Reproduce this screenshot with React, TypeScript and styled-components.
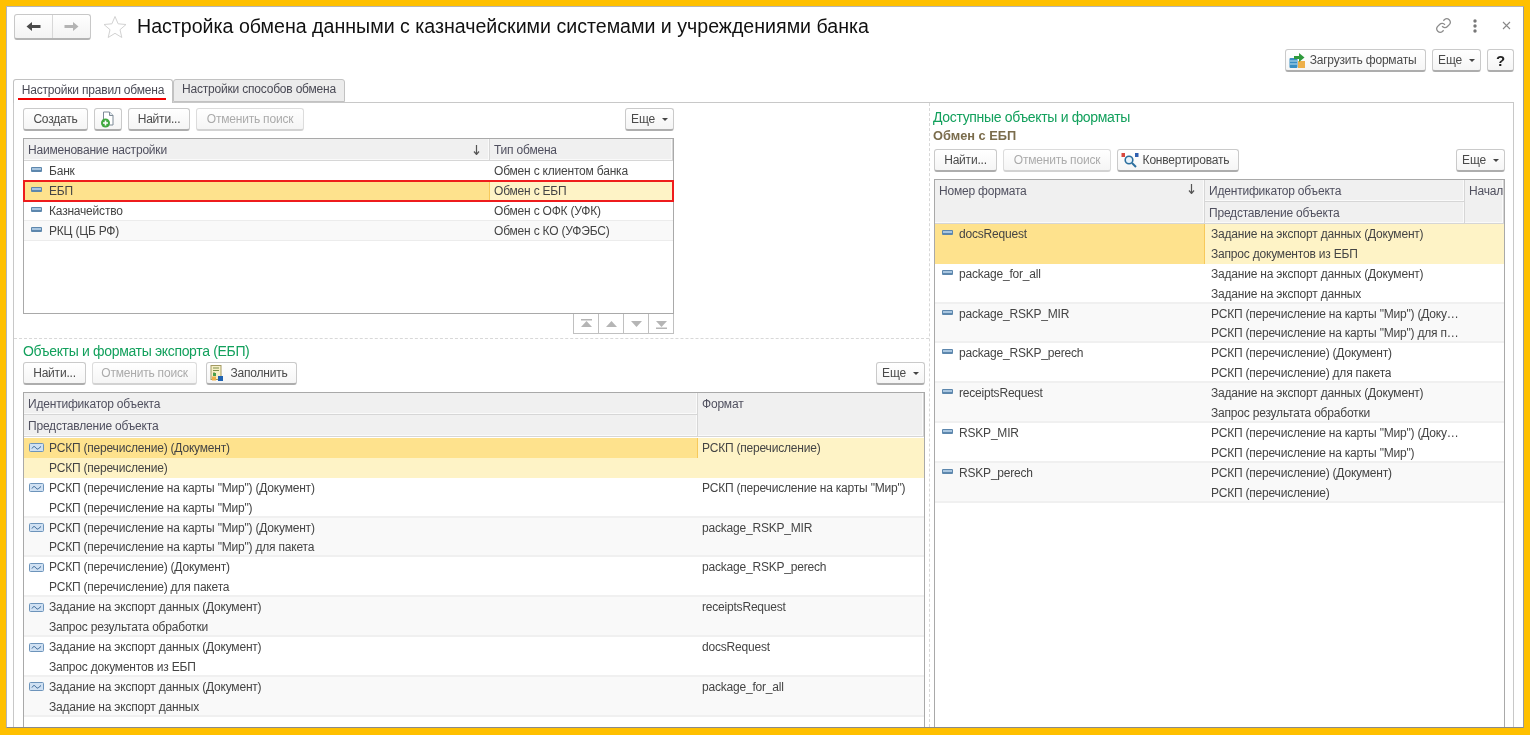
import { FunctionComponent } from "react";
import styled, { createGlobalStyle } from "styled-components";

const Global = createGlobalStyle`
  html, body { margin: 0; padding: 0; background: #ffc000; overflow: hidden; }
  body { font-family: "Liberation Sans", Arial, sans-serif; font-size: 12px; letter-spacing: -0.2px; color: #444; }
`;

const settings = [
  { name: "Банк", type: "Обмен с клиентом банка" },
  { name: "ЕБП", type: "Обмен с ЕБП", selected: true },
  { name: "Казначейство", type: "Обмен с ОФК (УФК)" },
  { name: "РКЦ (ЦБ РФ)", type: "Обмен с КО (УФЭБС)" },
];

const exportRows = [
  { id: "РСКП (перечисление) (Документ)", view: "РСКП (перечисление)", format: "РСКП (перечисление)", selected: true },
  { id: 'РСКП (перечисление на карты "Мир") (Документ)', view: 'РСКП (перечисление на карты "Мир")', format: 'РСКП (перечисление на карты "Мир")' },
  { id: 'РСКП (перечисление на карты "Мир") (Документ)', view: 'РСКП (перечисление на карты "Мир") для пакета', format: "package_RSKP_MIR" },
  { id: "РСКП (перечисление) (Документ)", view: "РСКП (перечисление) для пакета", format: "package_RSKP_perech" },
  { id: "Задание на экспорт данных (Документ)", view: "Запрос результата обработки", format: "receiptsRequest" },
  { id: "Задание на экспорт данных (Документ)", view: "Запрос документов из ЕБП", format: "docsRequest" },
  { id: "Задание на экспорт данных (Документ)", view: "Задание на экспорт данных", format: "package_for_all" },
];

const formatRows = [
  { num: "docsRequest", id: "Задание на экспорт данных (Документ)", view: "Запрос документов из ЕБП", selected: true },
  { num: "package_for_all", id: "Задание на экспорт данных (Документ)", view: "Задание на экспорт данных" },
  { num: "package_RSKP_MIR", id: 'РСКП (перечисление на карты "Мир") (Документ)', view: 'РСКП (перечисление на карты "Мир") для пакета' },
  { num: "package_RSKP_perech", id: "РСКП (перечисление) (Документ)", view: "РСКП (перечисление) для пакета" },
  { num: "receiptsRequest", id: "Задание на экспорт данных (Документ)", view: "Запрос результата обработки" },
  { num: "RSKP_MIR", id: 'РСКП (перечисление на карты "Мир") (Документ)', view: 'РСКП (перечисление на карты "Мир")' },
  { num: "RSKP_perech", id: "РСКП (перечисление) (Документ)", view: "РСКП (перечисление)" },
];

const DashIcon = () => (
  <svg width="11" height="5" viewBox="0 0 11 5">
    <rect x="0" y="0" width="11" height="5" rx="1" fill="#5d87ad" />
    <rect x="1" y="1" width="9" height="2" fill="#a9c6e0" />
  </svg>
);

const WaveIcon = () => (
  <svg width="15" height="9" viewBox="0 0 15 9">
    <rect x="0.5" y="0.5" width="14" height="8" rx="1" fill="#cfe0f2" stroke="#6d94bb" />
    <path d="M3 5.500c1.500-2.500 2.500-2.500 4-.5s2 1 5-1.500" fill="none" stroke="#2f5f90" />
  </svg>
);

const SortArrow = () => (
  <SortMark width="7" height="10" viewBox="0 0 7 10">
    <path d="M3.500 0v9M1 6.500l2.500 3 2.500-3" fill="none" stroke="#555" strokeWidth="1.200" />
  </SortMark>
);

const NewDocIcon = () => (
  <svg width="16" height="17" viewBox="0 0 16 17">
    <path d="M3.500 1h6l3.500 3.500V14h-9.500z" fill="#fff" stroke="#7d8a96" />
    <path d="M9.500 1v3.500H13" fill="#dfe6ec" stroke="#7d8a96" />
    <circle cx="5.500" cy="12" r="4.500" fill="#3fa83f" />
    <path d="M5.500 9.500v5M3 12h5" stroke="#fff" strokeWidth="1.600" />
  </svg>
);

const LoadIcon = () => (
  <svg width="17" height="17" viewBox="0 0 17 17">
    <rect x="0.500" y="6" width="8" height="10" rx="1" fill="#3a8fc2" />
    <path d="M1 9h7M1 12h7" stroke="#bfe0f0" />
    <rect x="9" y="9" width="7" height="7" fill="#eeb04a" />
    <path d="M5 4h5V1l5.500 4.500L10 10V7H5z" fill="#2f9a3c" />
  </svg>
);

const FillIcon = () => (
  <svg width="17" height="17" viewBox="0 0 17 17">
    <rect x="2" y="0.500" width="10" height="14" fill="#f6efc6" stroke="#a49a62" />
    <path d="M4 3h6M4 5.500h6M4 8h2" stroke="#7f8f4a" />
    <rect x="4" y="8" width="3" height="3" fill="#4aa04a" />
    <rect x="3" y="11.500" width="4" height="4" fill="#eeb04a" />
    <rect x="9" y="11" width="5" height="5" fill="#1f62b0" />
  </svg>
);

const ConvertIcon = () => (
  <svg width="18" height="16" viewBox="0 0 18 16">
    <circle cx="8" cy="8" r="3.800" fill="#e8f3fb" stroke="#2b6f9e" strokeWidth="1.600" />
    <path d="M11 11l4 4" stroke="#2b6f9e" strokeWidth="2" />
    <rect x="0.500" y="1" width="3.500" height="4" fill="#d8483f" />
    <rect x="14" y="1" width="3.500" height="4" fill="#2f5fb0" />
  </svg>
);

const Frame = styled.div`
  height: 735px;
  box-sizing: border-box;
  padding: 6px 6px 7px 6px;
  background: #ffc000;
`;

const Win = styled.div`
  height: 100%;
  box-sizing: border-box;
  background: #fff;
  border: 1px solid #b5b5b5;
  border-right-color: #9a9a9a;
  border-bottom-color: #8a8a8a;
  display: flex;
  flex-direction: column;
  overflow: hidden;
  filter: blur(0.3px);
`;

const Head = styled.div`
  display: flex;
  align-items: center;
  height: 27px;
  margin-top: 6px;
  padding: 0 12px 0 7px;
  flex: none;
`;

const NavGroup = styled.div`
  display: flex;
  width: 77px;
  height: 26px;
  box-sizing: border-box;
  border: 1px solid #c8c8c8;
  border-bottom: 2px solid #b4b4b4;
  border-radius: 3px;
  background: linear-gradient(#fff, #f3f3f3);
`;

const NavBtn = styled.div<{ $line?: boolean }>`
  flex: 1;
  display: flex;
  align-items: center;
  justify-content: center;
  border-left: ${({ $line }) => ($line ? "1px solid #d8d8d8" : "none")};
`;

const StarBox = styled.div`
  display: flex;
  margin: 0 10px 0 12px;
`;

const Title = styled.h1`
  margin: 0;
  flex: 1;
  font-size: 19.6px;
  font-weight: normal;
  letter-spacing: 0;
  color: #111;
  white-space: nowrap;
`;

const WinIcons = styled.div`
  display: flex;
  align-items: center;
  margin-top: -2px;
`;

const DotsIcon = styled.svg`
  margin: 0 25px 0 21px;
`;

const CommandBar = styled.div`
  display: flex;
  justify-content: flex-end;
  gap: 6px;
  height: 23px;
  margin-top: 9px;
  padding-right: 9px;
  flex: none;
`;

const Btn = styled.div<{ $w: number; $off?: boolean }>`
  width: ${({ $w }) => $w}px;
  height: 23px;
  flex: none;
  box-sizing: border-box;
  display: flex;
  align-items: center;
  justify-content: center;
  gap: 4px;
  white-space: nowrap;
  border: 1px solid ${({ $off }) => ($off ? "#dcdcdc" : "#cacaca")};
  border-bottom: 2px solid ${({ $off }) => ($off ? "#d2d2d2" : "#adadad")};
  border-radius: 3px;
  background: linear-gradient(#ffffff, #f5f5f5);
  color: ${({ $off }) => ($off ? "#ababab" : "#4a4a4a")};
`;

const IconBtn = styled(Btn)<{ $gapLeft?: number }>`
  padding-right: 6px;
  margin-left: ${({ $gapLeft }) => $gapLeft ?? 0}px;
`;

const Caret = styled.span`
  width: 0;
  height: 0;
  margin-left: 3px;
  border-left: 3px solid transparent;
  border-right: 3px solid transparent;
  border-top: 3px solid #444;
`;

const Help = styled.span`
  font-size: 15px;
  font-weight: bold;
  color: #222;
`;

const TabRow = styled.div`
  display: flex;
  height: 23px;
  margin-top: 7px;
  padding-left: 6px;
  flex: none;
  position: relative;
  z-index: 1;
`;

const Tab = styled.div<{ $active?: boolean; $w: number }>`
  position: relative;
  width: ${({ $w }) => $w}px;
  box-sizing: border-box;
  height: ${({ $active }) => ($active ? "24px" : "23px")};
  display: flex;
  align-items: center;
  justify-content: center;
  padding-bottom: ${({ $active }) => ($active ? "4px" : "3px")};
  border: 1px solid #c2c2c2;
  border-bottom: ${({ $active }) => ($active ? "none" : "1px solid #c2c2c2")};
  border-radius: 3px 3px 0 0;
  background: ${({ $active }) => ($active ? "#fff" : "#ececec")};
  color: #4a4a55;
  ${({ $active }) =>
    $active &&
    `&::after {
      content: "";
      position: absolute;
      left: 4px;
      right: 6px;
      bottom: 3px;
      height: 2px;
      background: #f00000;
    }`}
`;

const TabPage = styled.div`
  flex: 1;
  min-height: 0;
  margin: 0 9px 0 6px;
  border: 1px solid #c8c8c8;
  border-bottom: none;
  display: flex;
  overflow: hidden;
`;

const LeftCol = styled.div`
  width: 916px;
  flex: none;
  box-sizing: border-box;
  padding: 5px 4px 0 9px;
  border-right: 1px dashed #d8d8d8;
  display: flex;
  flex-direction: column;
`;

const RightCol = styled.div`
  flex: 1;
  min-width: 0;
  padding: 6px 8px 0 3px;
  display: flex;
  flex-direction: column;
`;

const TopBlock = styled.div`
  width: 651px;
`;

const Toolbar = styled.div`
  display: flex;
  gap: 6px;
  height: 23px;
  flex: none;
`;

const Spacer = styled.div`
  flex: 1;
`;

const Table = styled.div<{ $mt: number }>`
  margin-top: ${({ $mt }) => $mt}px;
  border: 1px solid #a9a9a9;
`;

const TopTable = styled(Table)`
  height: 176px;
  box-sizing: border-box;
`;

const FillTable = styled(Table)`
  flex: 1;
  min-height: 0;
  border-bottom: none;
  overflow: hidden;
`;

const Grid = styled.div<{ $cols: string }>`
  display: grid;
  grid-template-columns: ${({ $cols }) => $cols};
`;

const LowerHead = styled(Grid)`
  padding-bottom: 1px;
`;

const HeadCell = styled.div<{ $span?: boolean }>`
  box-sizing: border-box;
  height: ${({ $span }) => ($span ? "44px" : "22px")};
  padding: 0 4px;
  display: flex;
  align-items: ${({ $span }) => ($span ? "flex-start" : "center")};
  padding-top: ${({ $span }) => ($span ? "4px" : "0")};
  justify-content: space-between;
  background: #f0f0f0;
  border-right: 1px solid #d6d6d6;
  border-bottom: 1px solid #d6d6d6;
  box-shadow: inset -1px -1px 0 #fafafa;
  color: #50505f;
  white-space: nowrap;
  overflow: hidden;
`;

const SortMark = styled.svg`
  flex: none;
  margin-right: 5px;
`;

const PlainRow = styled(Grid)<{ $picked?: boolean; $alt?: boolean }>`
  height: 20px;
  box-sizing: border-box;
  border-bottom: 1px solid #ececec;
  background: ${({ $alt }) => ($alt ? "#f9f9f9" : "#fff")};
  ${({ $picked }) => $picked && "outline: 2px solid #ee1c1c; outline-offset: -1px; position: relative;"}
`;

const Cell = styled.div<{ $tone?: "dark" | "light" }>`
  display: flex;
  align-items: center;
  gap: 5px;
  height: 100%;
  box-sizing: border-box;
  padding: 0 4px;
  white-space: nowrap;
  overflow: hidden;
  background: ${({ $tone }) => ($tone === "dark" ? "#fee28d" : $tone === "light" ? "#fef3c6" : "transparent")};
  border-right: ${({ $tone }) => ($tone === "dark" ? "1px solid #f7c95a" : "none")};
`;

const IconSlot = styled.span`
  width: 16px;
  height: 14px;
  flex: none;
  display: flex;
  align-items: center;
  justify-content: center;
`;

const DashSlot = styled(IconSlot)`
  padding-bottom: 3px;
  box-sizing: border-box;
`;

const TallRow = styled(Grid)<{ $alt?: boolean }>`
  height: 39.83px;
  box-sizing: border-box;
  border-bottom: 2px solid #f0f0f0;
  background: ${({ $alt }) => ($alt ? "#f9f9f9" : "#fff")};
`;

const Stack = styled.div`
  display: flex;
  flex-direction: column;
  min-width: 0;
`;

const Line = styled(Cell)`
  height: 19.9px;
  flex: none;
`;

const RightLine = styled(Line)`
  padding: 0 1px 0 6px;
`;

const Ellipsis = styled.span`
  overflow: hidden;
  text-overflow: ellipsis;
`;

const Indent = styled.span`
  width: 16px;
  flex: none;
`;

const TopCell = styled(Cell)`
  align-items: flex-start;
  gap: 4px;
  padding-top: 3px;
`;

const Pager = styled.div`
  display: flex;
  justify-content: flex-end;
`;

const PagerBtn = styled.div`
  width: 26px;
  height: 20px;
  box-sizing: border-box;
  display: flex;
  align-items: center;
  justify-content: center;
  border: 1px solid #c0c0c0;
  border-top: none;
  margin-left: -1px;
  background: #fff;
`;

const Separator = styled.div`
  height: 0;
  margin: 4px -4px 0 -9px;
  border-top: 1px dashed #d8d8d8;
`;

const GroupTitle = styled.div`
  font-size: 14px;
  letter-spacing: -0.33px;
  line-height: 16px;
  color: #12a05c;
  white-space: nowrap;
`;

const LowerTitle = styled(GroupTitle)`
  margin-top: 4px;
`;

const SubTitle = styled.div`
  margin-top: 3px;
  font-weight: bold;
  font-size: 12.8px;
  letter-spacing: 0;
  line-height: 16px;
  color: #7a6c4c;
`;

const LowerBar = styled(Toolbar)`
  margin-top: 3px;
`;

const RightBar = styled(Toolbar)`
  margin: 5px 0 0 1px;
`;

const RightTable = styled(FillTable)`
  margin-left: 1px;
`;

const Tri = ({ up, bar }: { up?: boolean; bar?: boolean }) => (
  <svg width="13" height="10" viewBox="0 0 13 10">
    <path d={up ? "M6.500 2L12 8H1z" : "M6.500 8L1 2h11z"} fill="#b5b5b5" />
    {bar && <rect x="1" y={up ? 0 : 8.500} width="11" height="1.500" fill="#b5b5b5" />}
  </svg>
);

const Dropdown: FunctionComponent = () => (
  <Btn $w={49}>
    Еще
    <Caret />
  </Btn>
);

const App: FunctionComponent = () => {
  const topCols = "466px 1fr";
  const lowerCols = "674px 1fr";
  const rightCols = "270px 260px 1fr";
  return (
    <Frame>
      <Global />
      <Win>
        <Head>
          <NavGroup>
            <NavBtn>
              <svg width="15" height="11" viewBox="0 0 15 11">
                <path d="M0.500 5.500L6 1v3h8.500v3H6v3z" fill="#4a4a4a" />
              </svg>
            </NavBtn>
            <NavBtn $line>
              <svg width="15" height="11" viewBox="0 0 15 11">
                <path d="M14.500 5.500L9 1v3H.5v3H9v3z" fill="#b4b4b4" />
              </svg>
            </NavBtn>
          </NavGroup>
          <StarBox>
            <svg width="24" height="24" viewBox="0 0 24 24">
              <path d="M12 1.500l3.100 7.300 7.900.7-6 5.200 1.800 7.800L12 18.300l-6.800 4.200L7 14.700 1 9.500l7.900-.7z" fill="#fff" stroke="#d2d2d2" />
            </svg>
          </StarBox>
          <Title>Настройка обмена данными с казначейскими системами и учреждениями банка</Title>
          <WinIcons>
            <svg width="17" height="17" viewBox="0 0 24 24" fill="none" stroke="#8c8c8c" strokeWidth="1.800">
              <path d="M10 13a5 5 0 0 0 7.500.5l3-3a5 5 0 0 0-7-7l-1.700 1.700" />
              <path d="M14 11a5 5 0 0 0-7.500-.5l-3 3a5 5 0 0 0 7 7l1.700-1.700" />
            </svg>
            <DotsIcon width="4" height="14" viewBox="0 0 4 14">
              <circle cx="2" cy="2" r="1.700" fill="#777" />
              <circle cx="2" cy="7" r="1.700" fill="#777" />
              <circle cx="2" cy="12" r="1.700" fill="#777" />
            </DotsIcon>
            <svg width="9" height="9" viewBox="0 0 9 9">
              <path d="M1 1l7 7M8 1L1 8" stroke="#888" strokeWidth="1.100" />
            </svg>
          </WinIcons>
        </Head>

        <CommandBar>
          <IconBtn $w={141}>
            <LoadIcon />
            Загрузить форматы
          </IconBtn>
          <Dropdown />
          <Btn $w={27}>
            <Help>?</Help>
          </Btn>
        </CommandBar>

        <TabRow>
          <Tab $active $w={160}>Настройки правил обмена</Tab>
          <Tab $w={172}>Настройки способов обмена</Tab>
        </TabRow>

        <TabPage>
          <LeftCol>
            <TopBlock>
              <Toolbar>
                <Btn $w={65}>Создать</Btn>
                <Btn $w={28}>
                  <NewDocIcon />
                </Btn>
                <Btn $w={62}>Найти...</Btn>
                <Btn $w={108} $off>Отменить поиск</Btn>
                <Spacer />
                <Dropdown />
              </Toolbar>
              <TopTable $mt={7}>
                <Grid $cols={topCols}>
                  <HeadCell>
                    Наименование настройки
                    <SortArrow />
                  </HeadCell>
                  <HeadCell>Тип обмена</HeadCell>
                </Grid>
                {settings.map((s, i) => (
                  <PlainRow key={s.name} $cols={topCols} $picked={s.selected} $alt={i % 2 === 1}>
                    <Cell $tone={s.selected ? "dark" : undefined}>
                      <DashSlot>
                        <DashIcon />
                      </DashSlot>
                      {s.name}
                    </Cell>
                    <Cell $tone={s.selected ? "light" : undefined}>{s.type}</Cell>
                  </PlainRow>
                ))}
              </TopTable>
              <Pager>
                <PagerBtn><Tri up bar /></PagerBtn>
                <PagerBtn><Tri up /></PagerBtn>
                <PagerBtn><Tri /></PagerBtn>
                <PagerBtn><Tri bar /></PagerBtn>
              </Pager>
            </TopBlock>

            <Separator />
            <LowerTitle>Объекты и форматы экспорта (ЕБП)</LowerTitle>
            <LowerBar>
              <Btn $w={63}>Найти...</Btn>
              <Btn $w={105} $off>Отменить поиск</Btn>
              <IconBtn $w={91} $gapLeft={3}>
                <FillIcon />
                Заполнить
              </IconBtn>
              <Spacer />
              <Dropdown />
            </LowerBar>
            <FillTable $mt={7}>
              <LowerHead $cols={lowerCols}>
                <Stack>
                  <HeadCell>Идентификатор объекта</HeadCell>
                  <HeadCell>Представление объекта</HeadCell>
                </Stack>
                <HeadCell $span>Формат</HeadCell>
              </LowerHead>
              {exportRows.map((r, i) => (
                <TallRow key={r.id + r.view} $cols={lowerCols} $alt={i % 2 === 0 && !r.selected}>
                  <Stack>
                    <Line $tone={r.selected ? "dark" : undefined}>
                      <IconSlot>
                        <WaveIcon />
                      </IconSlot>
                      {r.id}
                    </Line>
                    <Line $tone={r.selected ? "light" : undefined}>
                      <Indent />
                      {r.view}
                    </Line>
                  </Stack>
                  <TopCell $tone={r.selected ? "light" : undefined}>{r.format}</TopCell>
                </TallRow>
              ))}
            </FillTable>
          </LeftCol>

          <RightCol>
            <GroupTitle>Доступные объекты и форматы</GroupTitle>
            <SubTitle>Обмен с ЕБП</SubTitle>
            <RightBar>
              <Btn $w={63}>Найти...</Btn>
              <Btn $w={108} $off>Отменить поиск</Btn>
              <IconBtn $w={122}>
                <ConvertIcon />
                Конвертировать
              </IconBtn>
              <Spacer />
              <Dropdown />
            </RightBar>
            <RightTable $mt={7}>
              <Grid $cols={rightCols}>
                <HeadCell $span>
                  Номер формата
                  <SortArrow />
                </HeadCell>
                <Stack>
                  <HeadCell>Идентификатор объекта</HeadCell>
                  <HeadCell>Представление объекта</HeadCell>
                </Stack>
                <HeadCell $span>Начало</HeadCell>
              </Grid>
              {formatRows.map((r, i) => (
                <TallRow key={r.num} $cols={rightCols} $alt={i % 2 === 0 && !r.selected}>
                  <TopCell $tone={r.selected ? "dark" : undefined}>
                    <DashSlot>
                      <DashIcon />
                    </DashSlot>
                    {r.num}
                  </TopCell>
                  <Stack>
                    <RightLine $tone={r.selected ? "light" : undefined}>
                      <Ellipsis>{r.id}</Ellipsis>
                    </RightLine>
                    <RightLine $tone={r.selected ? "light" : undefined}>
                      <Ellipsis>{r.view}</Ellipsis>
                    </RightLine>
                  </Stack>
                  <Cell $tone={r.selected ? "light" : undefined} />
                </TallRow>
              ))}
            </RightTable>
          </RightCol>
        </TabPage>
      </Win>
    </Frame>
  );
};

export default App;
